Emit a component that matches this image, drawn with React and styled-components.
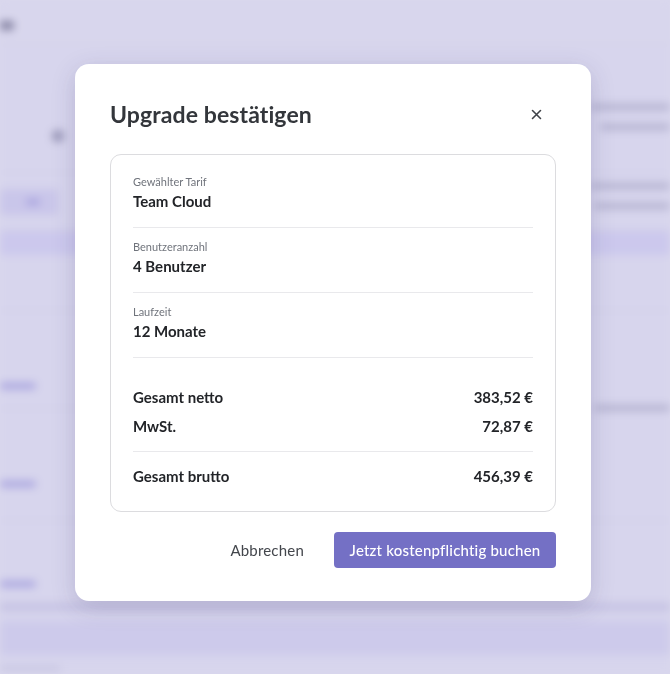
import React from "react";
import styled, { createGlobalStyle } from "styled-components";

const GlobalStyle = createGlobalStyle`
  html, body {
    margin: 0;
    padding: 0;
    width: 670px;
    height: 674px;
    overflow: hidden;
    background: #ffffff;
    font-family: "Lato", "Noto Sans", sans-serif;
  }
  * { box-sizing: border-box; }
`

const rows = [
  { label: "Gewählter Tarif", value: "Team Cloud" },
  { label: "Benutzeranzahl", value: "4 Benutzer" },
  { label: "Laufzeit", value: "12 Monate" },
]

const CloseIcon = () => (
  <svg width="11" height="11" viewBox="0 0 11 11" fill="none">
    <path d="M1.5 1.5l8 8M9.5 1.5l-8 8" stroke="#3f4248" strokeWidth="1.6" strokeLinecap="round" />
  </svg>
)

const App = () => (
  <>
    <GlobalStyle />
    <Page aria-hidden="true">
      <PageHeader>
        <Blur w={14} h={9} tone="dark" />
      </PageHeader>
      <ToolRow>
        <IconBlob />
        <SideText>
          <Blur w={80} />
          <Blur w={70} />
        </SideText>
      </ToolRow>
      <ActionRow>
        <GhostButton><Blur w={14} tone="blue" /></GhostButton>
        <SideText shift={-12}>
          <Blur w={80} />
          <Blur w={76} />
        </SideText>
      </ActionRow>
      <TableHead />
      <TableRow h={56} />
      <TableRow h={98}>
        <RowCell top={72}><Blur w={36} tone="blue" /></RowCell>
        <RowCell top={94}><Blur w={76} /></RowCell>
      </TableRow>
      <TableRow h={112}>
        <RowCell top={72}><Blur w={36} tone="blue" /></RowCell>
      </TableRow>
      <TableRow h={90} last>
        <RowCell top={60}><Blur w={36} tone="blue" /></RowCell>
      </TableRow>
      <FooterBand />
      <BottomLine />
    </Page>

    <Overlay>
      <Modal>
        <ModalHeader>
          <ModalTitle>Upgrade bestätigen</ModalTitle>
          <CloseButton aria-label="Schließen"><CloseIcon /></CloseButton>
        </ModalHeader>

        <SummaryCard>
          {rows.map(r => (
            <Section key={r.label}>
              <Label>{r.label}</Label>
              <Value>{r.value}</Value>
            </Section>
          ))}
          <Totals>
            <TotalRow>
              <span>Gesamt netto</span>
              <span>383,52 €</span>
            </TotalRow>
            <TotalRow>
              <span>MwSt.</span>
              <span>72,87 €</span>
            </TotalRow>
            <TotalDivider />
            <TotalRow>
              <span>Gesamt brutto</span>
              <span>456,39 €</span>
            </TotalRow>
          </Totals>
        </SummaryCard>

        <Footer>
          <CancelButton>Abbrechen</CancelButton>
          <PrimaryButton>Jetzt kostenpflichtig buchen</PrimaryButton>
        </Footer>
      </Modal>
    </Overlay>
  </>
)

/* blurred page behind the dialog */

const Page = styled.div`
  width: 670px;
  height: 674px;
  background: #fbfbff;
  filter: blur(4px);
  display: flex;
  flex-direction: column;
`

const PageHeader = styled.div`
  height: 44px;
  padding: 21px 0 0 0;
  border-bottom: 1px solid #efeff6;
  background: #fdfdff;
`

const ToolRow = styled.div`
  height: 129px;
  display: flex;
  justify-content: space-between;
  align-items: flex-start;
  padding: 86px 0 0 52px;
  border-bottom: 1px solid #f2f2f8;
`

const IconBlob = styled.div`
  width: 12px;
  height: 12px;
  border-radius: 50%;
  background: #a4a4b4;
`

const SideText = styled.div`
  display: flex;
  flex-direction: column;
  gap: 14px;
  align-items: flex-end;
  margin-top: ${p => (p.shift ?? -26)}px;
`

const blurTones = {
  blue: "#bab6ec",
  dark: "#8c8c9a",
  grey: "#cacad6",
}

const Blur = styled.div`
  width: ${p => p.w}px;
  height: ${p => p.h || 6}px;
  border-radius: 3px;
  background: ${p => blurTones[p.tone || "grey"]};
`

const ActionRow = styled.div`
  height: 58px;
  display: flex;
  justify-content: space-between;
  align-items: center;
  border-bottom: 1px solid #f2f2f8;
`

const GhostButton = styled.div`
  width: 58px;
  height: 26px;
  display: flex;
  align-items: center;
  justify-content: flex-end;
  padding-right: 18px;
  border-radius: 4px;
  background: #e9e7fb;
`

const TableHead = styled.div`
  height: 24px;
  background: #eceaff;
`

const TableRow = styled.div`
  height: ${p => p.h}px;
  display: flex;
  justify-content: space-between;
  align-items: flex-start;
  border-bottom: ${p => (p.last ? "8px solid #e4e2f2" : "1px solid #efeef7")};
`

const RowCell = styled.div`
  padding-top: ${p => p.top}px;
`

const FooterBand = styled.div`
  height: 34px;
  margin-top: 10px;
  background: #eeedfd;
`

const BottomLine = styled.div`
  width: 60px;
  height: 3px;
  margin-top: 12px;
  background: #d8d8e6;
`

/* dialog */

const Overlay = styled.div`
  position: fixed;
  inset: 0;
  background: rgba(112, 104, 186, 0.26);
  display: flex;
  align-items: flex-start;
  justify-content: center;
  padding: 64px 4px 0 0;
`

const Modal = styled.div`
  width: 516px;
  height: 537px;
  background: #ffffff;
  border-radius: 14px;
  padding: 35px 35px 33px;
  box-shadow: 0 6px 24px rgba(40, 36, 90, 0.18);
  display: flex;
  flex-direction: column;
`

const ModalHeader = styled.div`
  display: flex;
  align-items: center;
  justify-content: space-between;
  height: 30px;
`

const ModalTitle = styled.h2`
  margin: 0;
  font-size: 23px;
  line-height: 30px;
  font-weight: 700;
  color: #33363b;
  letter-spacing: 0.1px;
`

const CloseButton = styled.button`
  border: 0;
  background: transparent;
  padding: 4px;
  margin-right: 10px;
  display: flex;
  cursor: pointer;
`

const SummaryCard = styled.div`
  margin-top: 25px;
  border: 1px solid #dcdcdf;
  border-radius: 11px;
  padding: 8px 22px 25px;
`

const Section = styled.div`
  padding: 12px 0 16px;
  border-bottom: 1px solid #e9e9ec;
  display: flex;
  flex-direction: column;
  gap: 2px;
`

const Label = styled.div`
  font-size: 11px;
  line-height: 14px;
  color: #70747c;
`

const Value = styled.div`
  font-size: 15px;
  line-height: 20px;
  font-weight: 700;
  color: #222428;
`

const Totals = styled.div`
  padding-top: 29px;
  display: flex;
  flex-direction: column;
  gap: 9px;
`

const TotalRow = styled.div`
  display: flex;
  justify-content: space-between;
  font-size: 15px;
  line-height: 20px;
  font-weight: 700;
  color: #222428;
`

const TotalDivider = styled.div`
  height: 1px;
  background: #e9e9ec;
  margin: 6px 0 5px;
`

const Footer = styled.div`
  margin-top: 20px;
  display: flex;
  justify-content: flex-end;
  align-items: center;
  gap: 14px;
`

const CancelButton = styled.button`
  border: 0;
  background: transparent;
  height: 36px;
  padding: 0 16px;
  font-family: inherit;
  font-size: 15px;
  color: #43464c;
  letter-spacing: 0.2px;
  cursor: pointer;
`

const PrimaryButton = styled.button`
  border: 0;
  height: 36px;
  width: 222px;
  border-radius: 4px;
  background: #7470c5;
  color: #ffffff;
  font-family: inherit;
  font-size: 15px;
  font-weight: 500;
  letter-spacing: 0.2px;
  cursor: pointer;
`

export default App
